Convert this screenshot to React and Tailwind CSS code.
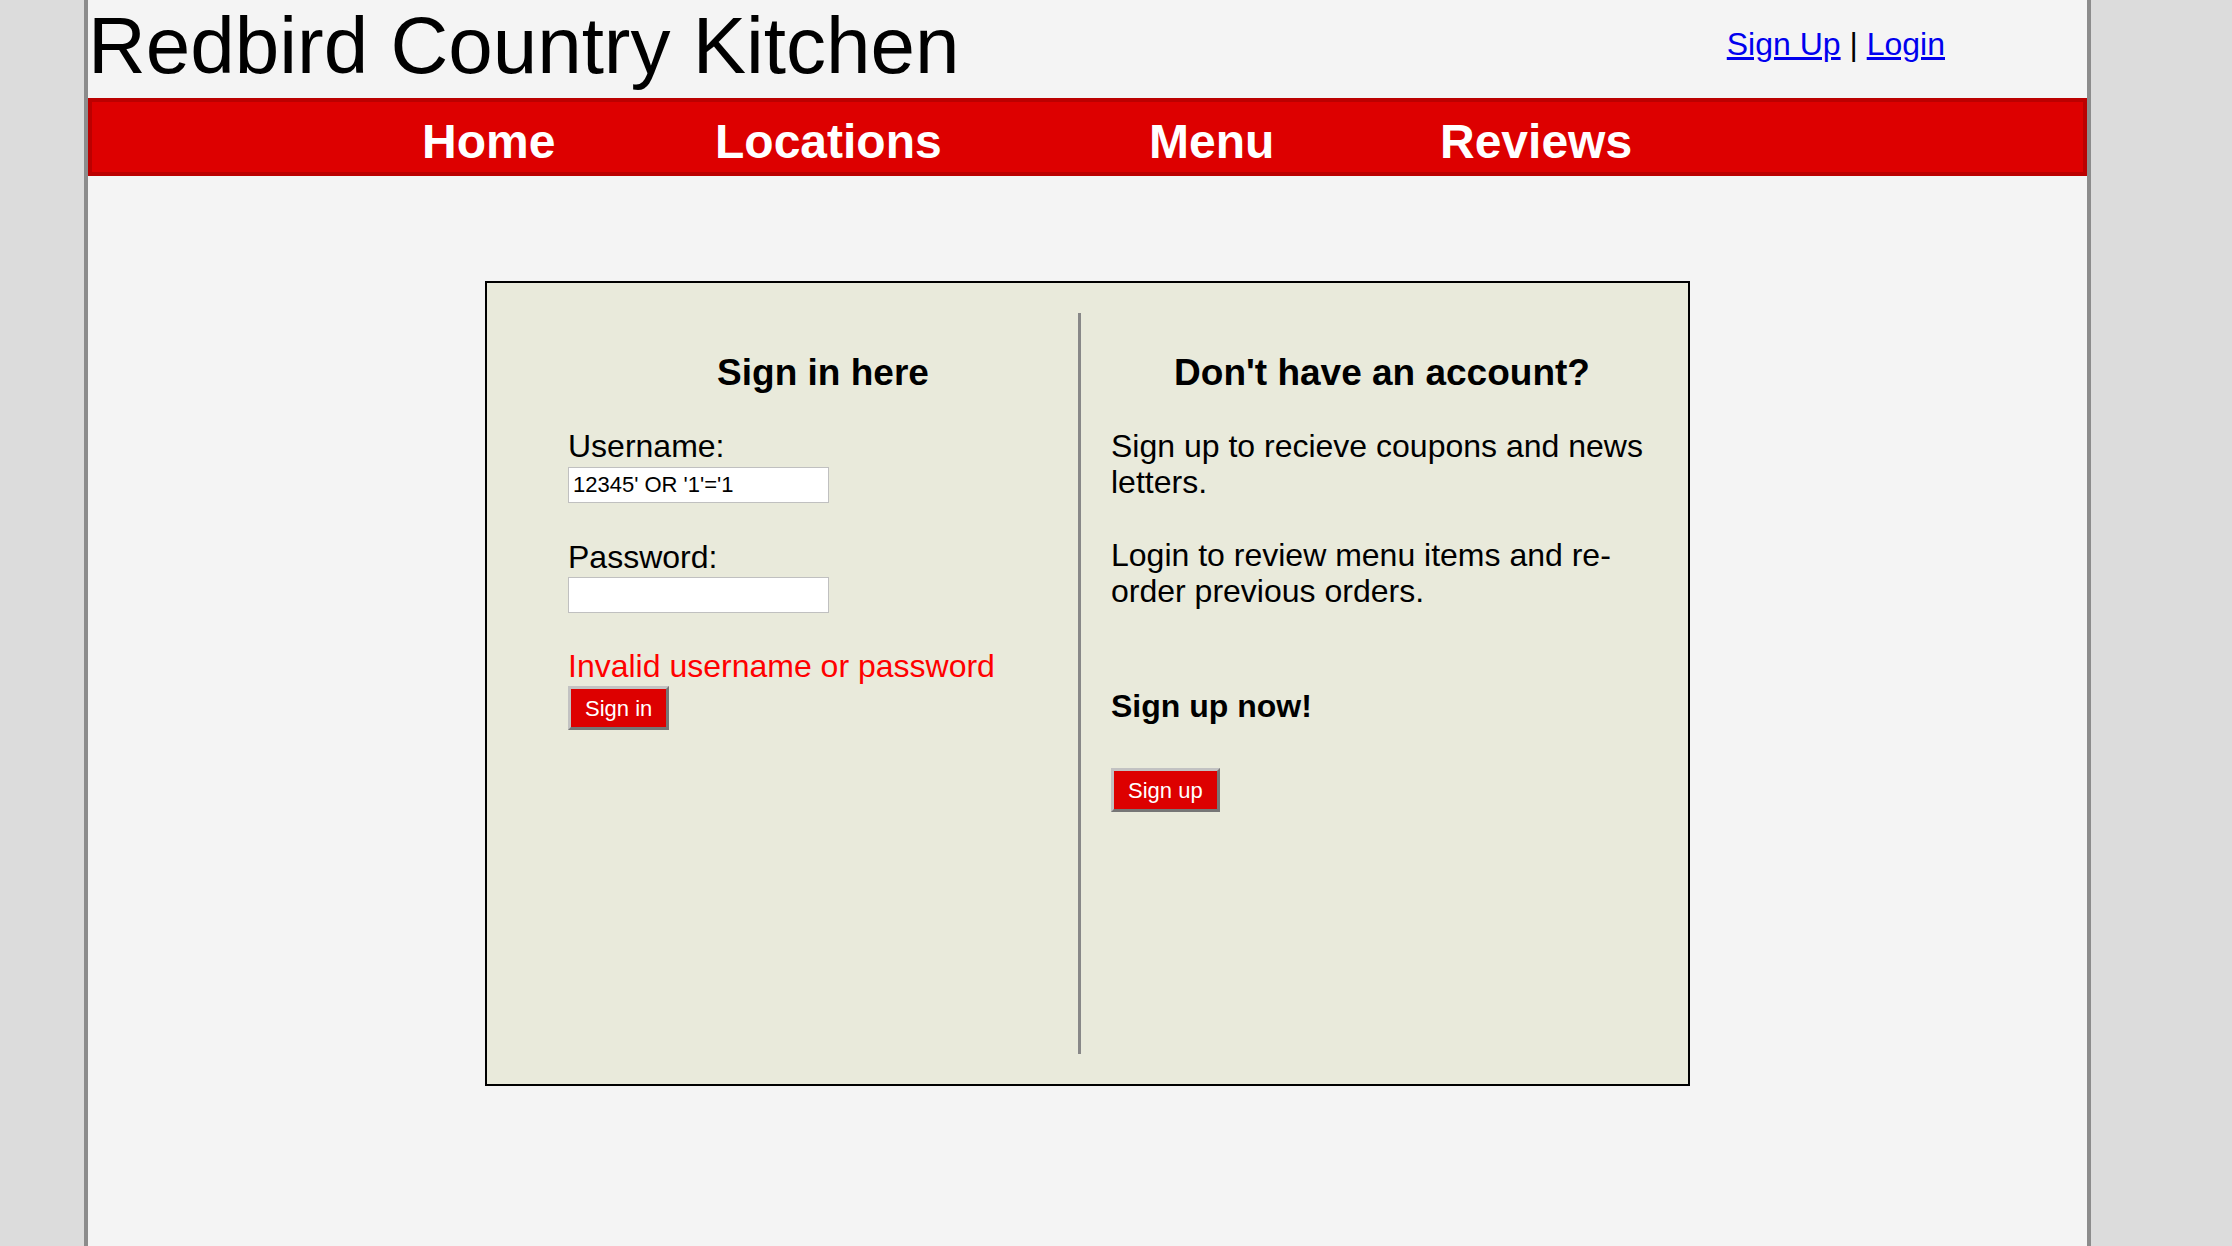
import React from 'react';

const navItems = [
  { label: 'Home', width: 'w-[293px]' },
  { label: 'Locations', width: 'w-[434px]' },
  { label: 'Menu', width: 'w-[291px]' },
  { label: 'Reviews', width: '' },
];

const RedButton = ({ children }) => (
  <button
    type="button"
    className="h-[44px] px-[14px] bg-[#dd0000] text-white text-[22px] leading-[25px] border-[3px] border-t-[#c2c2c2] border-l-[#c2c2c2] border-r-[#767676] border-b-[#767676]"
  >
    {children}
  </button>
);

const App = () => {
  return (
    <div className="min-h-screen bg-[#dcdcdc] font-['Liberation_Sans',Arial,sans-serif] text-black">
      <div className="ml-[84px] w-[2007px] min-h-screen border-x-4 border-[#8c8c8c] bg-[#f4f4f4]">
        <header className="flex justify-between items-start">
          <h1 className="text-[80px] leading-[92px] font-normal">Redbird Country Kitchen</h1>
          <div className="mt-[26px] pr-[142px] text-[32px] leading-[36px]">
            <a href="#" className="text-[#0000ee] underline">Sign Up</a>
            <span> | </span>
            <a href="#" className="text-[#0000ee] underline">Login</a>
          </div>
        </header>

        <nav className="mt-[6px] h-[78px] border-4 border-[#bb0000] bg-[#dd0000]">
          <ul className="flex pl-[330px] pt-[12px]">
            {navItems.map((item) => (
              <li key={item.label} className={`${item.width} text-white text-[48px] leading-[55px] font-bold`}>
                <a href="#">{item.label}</a>
              </li>
            ))}
          </ul>
        </nav>

        <main className="mt-[105px] mx-auto w-[1205px] h-[805px] border-2 border-black bg-[#e9eadb] py-[30px] flex">
          <section className="w-[591px] pl-[81px]">
            <h2 className="mt-[39px] text-[37px] leading-[41px] font-bold text-center">Sign in here</h2>
            <label className="block mt-[35px] text-[32px] leading-[36px]">Username:</label>
            <input
              type="text"
              defaultValue="12345' OR '1'='1"
              className="block mt-[3px] w-[261px] h-[36px] border border-[#c0c0c0] bg-white px-[4px] text-[22px] outline-none"
            />
            <label className="block mt-[36px] text-[32px] leading-[36px]">Password:</label>
            <input
              type="password"
              className="block mt-[2px] w-[261px] h-[36px] border border-[#c0c0c0] bg-white px-[4px] text-[22px] outline-none"
            />
            <p className="mt-[35px] text-[32px] leading-[36px] text-[#ff0000]">Invalid username or password</p>
            <div className="mt-[2px]">
              <RedButton>Sign in</RedButton>
            </div>
          </section>

          <section className="flex-1 border-l-[3px] border-[#888888] pl-[30px] pr-[35px]">
            <h2 className="mt-[39px] text-[37px] leading-[41px] font-bold text-center">Don't have an account?</h2>
            <p className="mt-[35px] text-[32px] leading-[36px]">Sign up to recieve coupons and news letters.</p>
            <p className="mt-[37px] text-[32px] leading-[36px]">Login to review menu items and re-order previous orders.</p>
            <h4 className="mt-[79px] text-[32px] leading-[36px] font-bold">Sign up now!</h4>
            <div className="mt-[44px]">
              <RedButton>Sign up</RedButton>
            </div>
          </section>
        </main>
      </div>
    </div>
  );
};

export default App;
